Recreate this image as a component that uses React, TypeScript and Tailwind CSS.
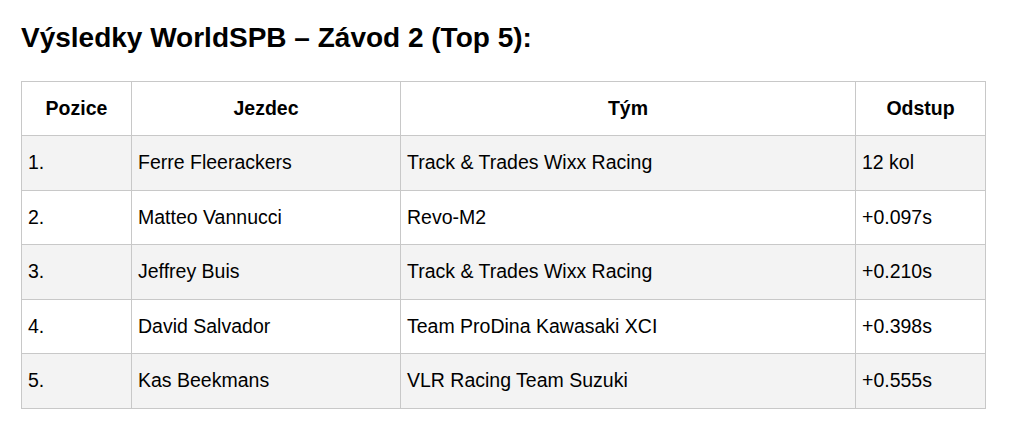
const rows = [
  { pos: '1.', rider: 'Ferre Fleerackers', team: 'Track & Trades Wixx Racing', gap: '12 kol' },
  { pos: '2.', rider: 'Matteo Vannucci', team: 'Revo-M2', gap: '+0.097s' },
  { pos: '3.', rider: 'Jeffrey Buis', team: 'Track & Trades Wixx Racing', gap: '+0.210s' },
  { pos: '4.', rider: 'David Salvador', team: 'Team ProDina Kawasaki XCI', gap: '+0.398s' },
  { pos: '5.', rider: 'Kas Beekmans', team: 'VLR Racing Team Suzuki', gap: '+0.555s' },
];

export default function App() {
  return (
    <div className="w-full min-h-screen bg-white px-[21px] pt-[22px] font-['Liberation_Sans',Arial,sans-serif] text-black">
      <h2 className="text-[28px] leading-[32px] font-bold mb-[27px]">Výsledky WorldSPB – Závod 2 (Top 5):</h2>
      <table className="w-[964px] border-collapse text-[19.5px] table-fixed">
        <colgroup>
          <col className="w-[110px]" />
          <col className="w-[269px]" />
          <col className="w-[455px]" />
          <col className="w-[130px]" />
        </colgroup>
        <thead>
          <tr className="h-[54px] bg-white">
            <th className="border border-[#c8c8c8] font-bold text-center">Pozice</th>
            <th className="border border-[#c8c8c8] font-bold text-center">Jezdec</th>
            <th className="border border-[#c8c8c8] font-bold text-center">Tým</th>
            <th className="border border-[#c8c8c8] font-bold text-center">Odstup</th>
          </tr>
        </thead>
        <tbody>
          {rows.map((r, i) => (
            <tr key={r.pos} className={i % 2 === 0 ? 'h-[54.5px] bg-[#f3f3f3]' : 'h-[54.5px] bg-white'}>
              <td className="border border-[#c8c8c8] px-[6px]">{r.pos}</td>
              <td className="border border-[#c8c8c8] px-[6px]">{r.rider}</td>
              <td className="border border-[#c8c8c8] px-[6px]">{r.team}</td>
              <td className="border border-[#c8c8c8] px-[6px]">{r.gap}</td>
            </tr>
          ))}
        </tbody>
      </table>
    </div>
  );
}
